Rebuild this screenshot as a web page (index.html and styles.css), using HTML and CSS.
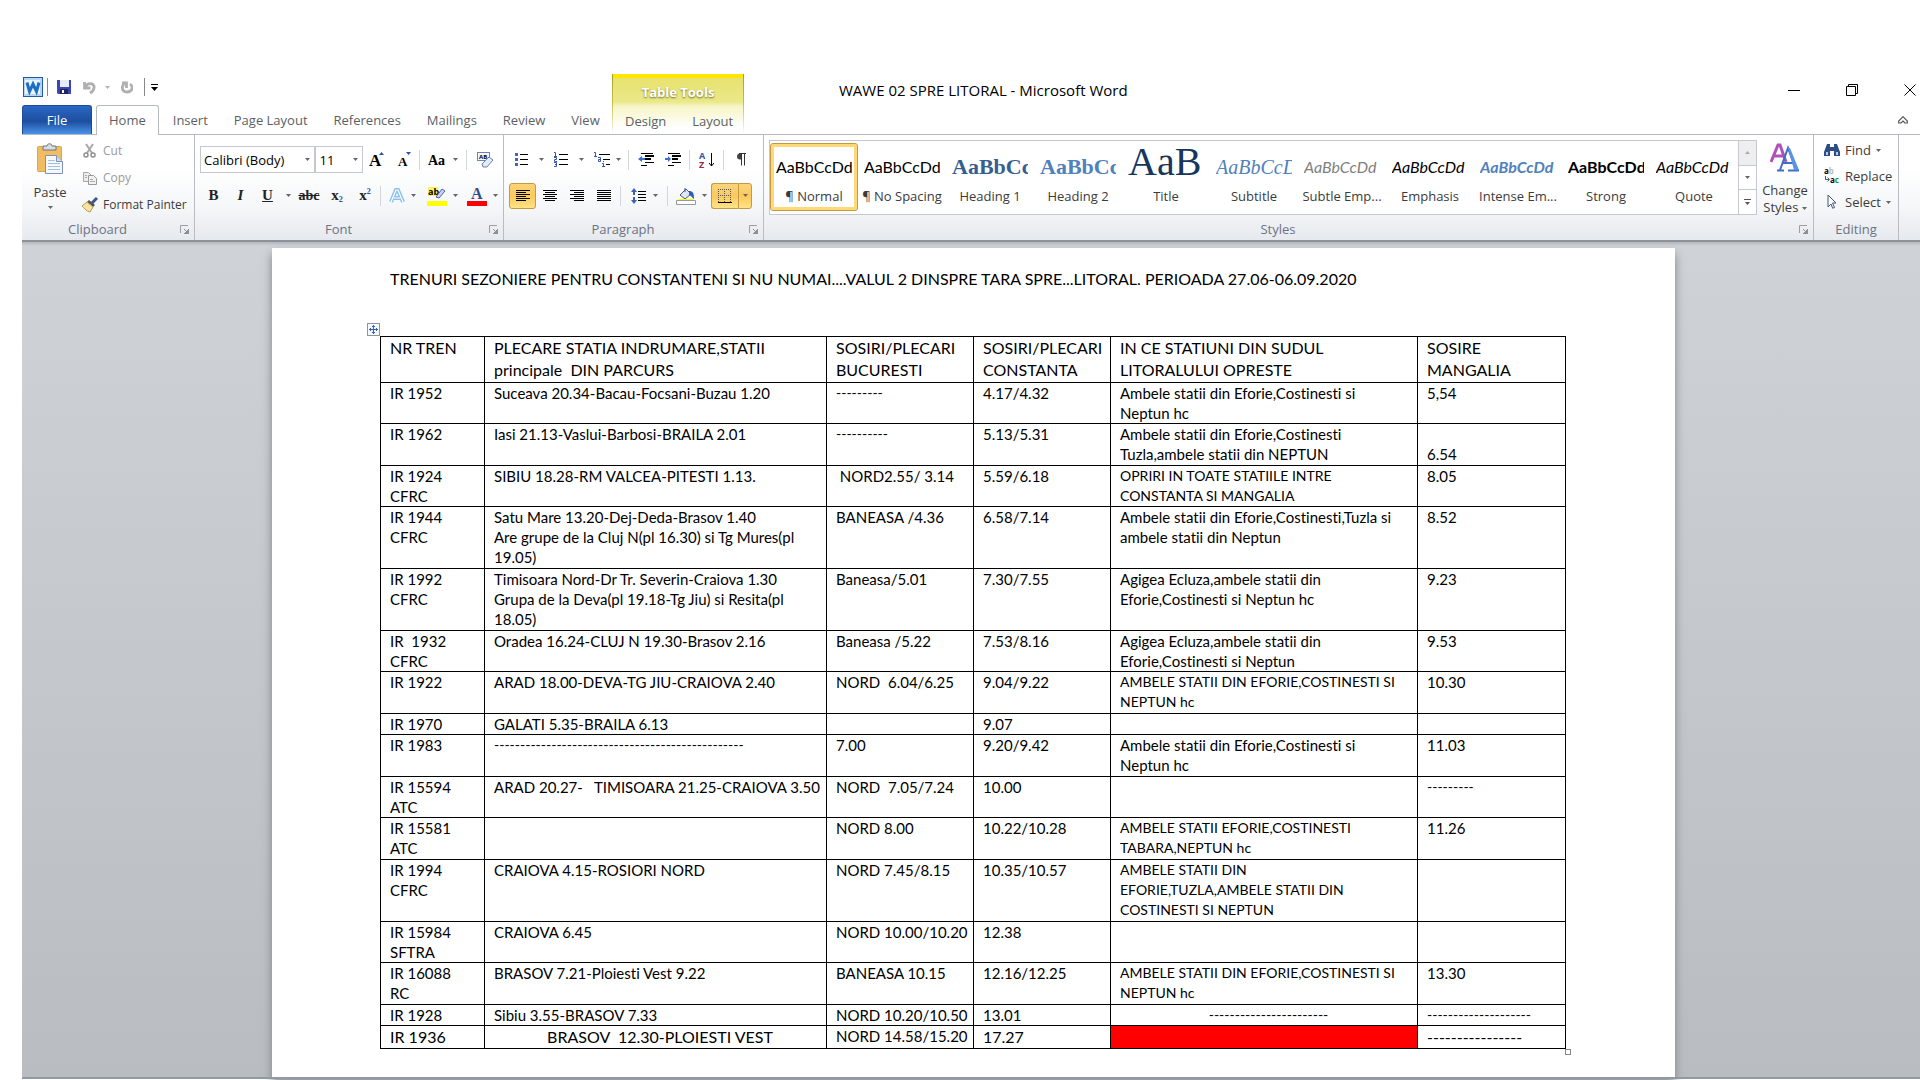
FILE: index.html
```
<!DOCTYPE html>
<html lang="ro">

<head>
    <meta charset="UTF-8">
    <meta name="viewport" content="width=device-width, initial-scale=1.0">
    <title>WAWE 02 SPRE LITORAL - Microsoft Word</title>
    <link rel="stylesheet" href="styles.css">
</head>

<body>
    <!-- shared shapes -->
    <svg class="defs" width="0" height="0" aria-hidden="true">
        <symbol id="arrow" viewBox="0 0 5 3"><path d="M0 0h5L2.500 3z" fill="#666"/></symbol>
        <symbol id="launcher" viewBox="0 0 9 9"><path d="M.5 8V.5H8" fill="none" stroke="#9a9ea6"/><path d="M9 4v5H4zM4 4l3 3" fill="#8c9098" stroke="#8c9098"/></symbol>
    </svg>

    <header class="top">
        <div class="left">
            <div class="quick">
                <svg width="20" height="20" viewBox="0 0 20 20"><rect x=".5" y=".5" width="19" height="19" fill="#b9d6f2" stroke="#1f5ca8"/><rect x="2" y="3" width="15" height="14" fill="#eaf4fd"/><path d="M4 5.500l2.500 9L10 7l3.500 7.500L16 5.500" fill="none" stroke="#1c6fc4" stroke-width="3"/></svg>
                <span class="line"></span>
                <button class="qbtn" aria-label="Save"><svg width="14" height="14" viewBox="0 0 14 14"><path d="M0 0h14v14H1l-1-1z" fill="#3b45b4"/><path d="M3 0h9v7H3z" fill="#e9edfb"/><path d="M3 9h8v5H3z" fill="#22265e"/><path d="M5 10h2v3H5z" fill="#fff"/></svg></button>
                <button class="qbtn" aria-label="Undo"><svg width="13" height="13" viewBox="0 0 13 13"><path d="M1.500 1v6h6M2 6c3-5 10-4 9 1-.5 3-2 4-4 5" fill="none" stroke="#b0b0b0" stroke-width="2.800"/></svg><svg class="arr pale"><use href="#arrow"/></svg></button>
                <button class="qbtn" aria-label="Redo"><svg width="12" height="13" viewBox="0 0 12 13"><path d="M3 3c-3 3-2 8 3 8s7-5 3-8M1 2h4.500v5" fill="none" stroke="#b0b0b0" stroke-width="2.800"/></svg></button>
                <span class="line"></span>
                <button class="qbtn more" aria-label="Customize"><svg width="7" height="7" viewBox="0 0 7 7"><path d="M0 0h7v1H0zM0 3h7L3.500 7z"/></svg></button>
            </div>
            <nav class="tabs">
                <button class="tab file">File</button>
                <button class="tab home">Home</button>
                <button class="tab">Insert</button>
                <button class="tab">Page Layout</button>
                <button class="tab">References</button>
                <button class="tab">Mailings</button>
                <button class="tab">Review</button>
                <button class="tab">View</button>
            </nav>
        </div>
        <div class="context">
            <div class="context-name">Table Tools</div>
            <div class="tabs">
                <button class="tab">Design</button>
                <button class="tab">Layout</button>
            </div>
        </div>
        <div class="right">
            <div class="titlebar">
                <h1>WAWE 02 SPRE LITORAL - Microsoft Word</h1>
                <button aria-label="Minimize"><svg width="12" height="12" viewBox="0 0 12 12"><path d="M0 6.500h12" stroke="#000"/></svg></button>
                <button aria-label="Restore"><svg width="12" height="12" viewBox="0 0 12 12"><path d="M.5 2.500h9v9h-9zM2.500 2.500v-2h9v9h-2" fill="none" stroke="#000"/></svg></button>
                <button aria-label="Close"><svg width="12" height="12" viewBox="0 0 12 12"><path d="M.5.5l11 11M11.500.5l-11 11" stroke="#000"/></svg></button>
            </div>
            <button class="collapse" aria-label="Minimize the ribbon"><svg width="10" height="8" viewBox="0 0 10 8"><path d="M5 .7L9.300 5v2H7L5 5 3 7H.7V5z" fill="#fff" stroke="#555" stroke-width="1.200"/></svg></button>
        </div>
    </header>

    <section class="ribbon">
        <div class="group clipboard">
            <div class="body">
                <button class="big">
                    <svg width="27" height="31" viewBox="0 0 27 31"><rect x=".5" y="3.500" width="24" height="25" rx="1" fill="#f0bd62" stroke="#dba650"/><path d="M6 3h4c0-3 5-3 5 0h4v4H6z" fill="#d9dde3" stroke="#6d7480"/><path d="M8.500 12.500h11l6 6v12h-17z" fill="#f4f8fd" stroke="#7d93b5"/><path d="M19.500 12.500v6h6" fill="#cfdcf0" stroke="#7d93b5"/><path d="M11 17.500h7M11 20.500h12M11 23.500h12M11 26.500h12" stroke="#a9bfdf"/></svg>
                    <span>Paste</span>
                    <svg class="arr"><use href="#arrow"/></svg>
                </button>
                <div class="list">
                    <button class="item off"><svg width="16" height="16" viewBox="0 0 16 16"><path d="M4 1l6 9M11 1l-6 9" stroke="#a8a8a8" stroke-width="2"/><circle cx="4" cy="12" r="2" fill="none" stroke="#8e8e8e" stroke-width="1.500"/><circle cx="11" cy="12" r="2" fill="none" stroke="#8e8e8e" stroke-width="1.500"/></svg>Cut</button>
                    <button class="item off"><svg width="16" height="16" viewBox="0 0 16 16"><path d="M1.500 2.500h5l3 3v6h-8z" fill="#eee" stroke="#a5a5a5"/><path d="M6.500 5.500h5l3 3v6h-8z" fill="#f2f2f2" stroke="#999"/><path d="M8 9.500h3M8 11.500h5M3 5.500h2M3 7.500h2" stroke="#aaa"/></svg>Copy</button>
                    <button class="item"><svg width="16" height="16" viewBox="0 0 16 16"><path d="M15 1l-5 5" stroke="#3c5487" stroke-width="3"/><path d="M7 3l6 5-2 2-6-5z" fill="#4b5563"/><path d="M5 5l6 5-3 5C4 14 2 11 0 9z" fill="#f6e3a0" stroke="#b99a50"/></svg>Format Painter</button>
                </div>
            </div>
            <div class="caption"><span>Clipboard</span><svg width="9" height="9"><use href="#launcher"/></svg></div>
        </div>

        <div class="group font">
            <div class="body rows">
                <div class="row">
                    <select class="face" aria-label="Font"><option>Calibri (Body)</option></select>
                    <select class="size" aria-label="Font size"><option>11</option></select>
                    <button class="ico w28" aria-label="Grow font"><svg width="16" height="20" viewBox="0 0 16 20"><text x="0" y="16" class="gl" font-size="17">A</text><path d="M10 5h5l-2.500-3z" fill="#2c4f9e"/></svg></button>
                    <button class="ico w28" aria-label="Shrink font"><svg width="15" height="20" viewBox="0 0 15 20"><text x="1" y="16" class="gl" font-size="12">A</text><path d="M9 2h5l-2.500 3z" fill="#2c4f9e"/></svg></button>
                    <span class="sep"></span>
                    <button class="ico w44" aria-label="Change case"><svg width="19" height="20" viewBox="0 0 19 20"><text x="0" y="15" class="gl" font-size="14">Aa</text></svg><svg class="arr"><use href="#arrow"/></svg></button>
                    <span class="sep"></span>
                    <button class="ico w36" aria-label="Clear formatting"><svg width="17" height="17" viewBox="0 0 17 17"><rect x=".5" y="1.500" width="12" height="8" fill="#f3f6fc" stroke="#6c83b4"/><text x="2" y="8" font-size="6" class="sans">AB</text><path d="M5 13l7-7 4 3-6 7H6z" fill="#e4ebf8" stroke="#6c83b4"/></svg></button>
                </div>
                <div class="row">
                    <button class="ico gl w27"><b>B</b></button>
                    <button class="ico gl w27"><i>I</i></button>
                    <button class="ico gl w27"><u>U</u></button>
                    <button class="ico w14" aria-label="Underline style"><svg class="arr"><use href="#arrow"/></svg></button>
                    <button class="ico gl w28 strike"><s>abc</s></button>
                    <button class="ico gl w28"><b>x</b><sub>2</sub></button>
                    <button class="ico gl w28"><b>x</b><sup>2</sup></button>
                    <span class="sep"></span>
                    <button class="ico w40" aria-label="Text effects"><svg width="16" height="16" viewBox="0 0 16 16"><path d="M2 14L7 2h2l5 12M4.500 10h7" fill="none" stroke="#8cc0ec" stroke-width="4"/><path d="M2 14L7 2h2l5 12M4.500 10h7" fill="none" stroke="#fff" stroke-width="1.200"/></svg><svg class="arr"><use href="#arrow"/></svg></button>
                    <button class="ico w40" aria-label="Highlight colour"><svg width="20" height="20" viewBox="0 0 20 20"><path d="M1 1h10v9H1z" fill="#fbf36a"/><text x="1" y="9" font-size="9" class="sans">ab</text><path d="M9 11l6-8 3 2-6 7z" fill="#c6d5ee" stroke="#4b66a3"/><path d="M0 15h20v5H0z" fill="#ff0"/></svg><svg class="arr"><use href="#arrow"/></svg></button>
                    <button class="ico w40" aria-label="Font colour"><svg width="20" height="20" viewBox="0 0 20 20"><text x="4" y="13" font-size="16" class="gl blue">A</text><path d="M0 15h20v5H0z" fill="red"/></svg><svg class="arr"><use href="#arrow"/></svg></button>
                </div>
            </div>
            <div class="caption"><span>Font</span><svg width="9" height="9"><use href="#launcher"/></svg></div>
        </div>

        <div class="group paragraph">
            <div class="body rows">
                <div class="row">
                    <button class="ico w40" aria-label="Bullets"><svg width="14" height="14" viewBox="0 0 14 14"><path d="M0 0h3v3H0zM0 5h3v3H0zM0 10h3v3H0z" fill="#4565b5"/><path d="M5 1.500h8M5 6.500h8M5 11.500h8" stroke="#000"/></svg><svg class="arr wide"><use href="#arrow"/></svg></button>
                    <button class="ico w40" aria-label="Numbering"><svg width="15" height="15" viewBox="0 0 15 15"><path d="M0 .5h1.500V4M0 4.500h3M0 5.500h2.500v2h-2v2H3M0 10.500h2.500v4H0M1 12.500h1.500" fill="none" stroke="#3558ae"/><path d="M5 2.500h9M5 7.500h9M5 12.500h9" stroke="#000"/></svg><svg class="arr wide"><use href="#arrow"/></svg></button>
                    <button class="ico w36" aria-label="Multilevel list"><svg width="16" height="15" viewBox="0 0 16 15"><path d="M0 .5h1.500V4M0 4.500h3M4 5.500h2.500v4h-2v-2h2M8 11.500h1.500V14M8 14.500h3M9 9.500h1" fill="none" stroke="#3558ae"/><path d="M5 2.500h11M9 7.500h7M12 12.500h4" stroke="#000"/></svg><svg class="arr"><use href="#arrow"/></svg></button>
                    <span class="sep"></span>
                    <button class="ico w27" aria-label="Decrease indent"><svg width="16" height="13" viewBox="0 0 16 13"><path d="M3 .5h12M7 3.500h9M7 6.500h6M7 9.500h9M3 12.500h6" stroke="#000"/><path d="M7 2.500h9M7 5.500h6" stroke="#000"/><path d="M0 6l4-3v2h3v2H4v2z" fill="#3b6fd0"/></svg></button>
                    <button class="ico w27" aria-label="Increase indent"><svg width="16" height="13" viewBox="0 0 16 13"><path d="M3 .5h12M7 3.500h9M7 6.500h6M7 9.500h9M3 12.500h6" stroke="#000"/><path d="M7 2.500h9M7 5.500h6" stroke="#000"/><path d="M6 6L3 3v2H0v2h3v2z" fill="#3b6fd0"/></svg></button>
                    <span class="sep"></span>
                    <button class="ico w27" aria-label="Sort"><svg width="15" height="20" viewBox="0 0 15 20"><text x="0" y="9" font-size="9" class="sans" fill="#2f55a8">A</text><text x="0" y="18" font-size="9" class="sans" fill="#9a2f3c">Z</text><path d="M12.500 3v13M10 13l2.500 3 2.500-3" fill="none" stroke="#000"/></svg></button>
                    <span class="sep"></span>
                    <button class="ico w27" aria-label="Show marks"><svg width="10" height="13" viewBox="0 0 10 13"><path d="M9.500.5H4a3 3 0 0 0 0 6h1V.5" fill="#444"/><path d="M3 .5h7M5.500.5v12M8.500.5v12" stroke="#333" fill="none"/></svg></button>
                </div>
                <div class="row">
                    <button class="ico w27 on" aria-label="Align left"><svg width="14" height="12" viewBox="0 0 14 12"><path d="M0 .5h14M0 2.500h10M0 4.500h14M0 6.500h10M0 8.500h14M0 10.500h10" stroke="#000"/></svg></button>
                    <button class="ico w27" aria-label="Center"><svg width="14" height="12" viewBox="0 0 14 12"><path d="M0 .5h14M2 2.500h10M0 4.500h14M2 6.500h10M0 8.500h14M2 10.500h10" stroke="#000"/></svg></button>
                    <button class="ico w27" aria-label="Align right"><svg width="14" height="12" viewBox="0 0 14 12"><path d="M0 .5h14M4 2.500h10M0 4.500h14M4 6.500h10M0 8.500h14M4 10.500h10" stroke="#000"/></svg></button>
                    <button class="ico w27" aria-label="Justify"><svg width="14" height="12" viewBox="0 0 14 12"><path d="M0 .5h14M0 2.500h14M0 4.500h14M0 6.500h14M0 8.500h14M0 10.500h14" stroke="#000"/></svg></button>
                    <span class="sep"></span>
                    <button class="ico w40" aria-label="Line spacing"><svg width="16" height="16" viewBox="0 0 16 16"><path d="M0 4l3-4 3 4H4v3H2V4zM0 12l3 4 3-4H4V9H2v3z" fill="#3a62b4"/><path d="M7 3.500h8M7 6.500h8M7 9.500h8M7 12.500h8" stroke="#000"/></svg><svg class="arr"><use href="#arrow"/></svg></button>
                    <span class="sep"></span>
                    <button class="ico w40" aria-label="Shading"><svg width="20" height="18" viewBox="0 0 20 18"><path d="M4 8l6-6 5 5-6 5z" fill="#dce6f5" stroke="#44597f"/><path d="M9 5V1" stroke="#44597f"/><path d="M13 4c4 0 5 2 5 8-2-1-2-3-5-4z" fill="#2f5fb0"/><path d="M2 12h15v1H2z" fill="#ff0"/><path d="M.5 13.500h19v4H.5z" fill="#fff" stroke="#999"/></svg><svg class="arr"><use href="#arrow"/></svg></button>
                    <button class="ico w27 on join" aria-label="Borders"><svg width="14" height="14" viewBox="0 0 14 14"><path d="M0 .5h14M0 6.500h14M.5 0v13M6.500 0v13M12.500 0v13" stroke="#555" stroke-dasharray="1 1"/><path d="M0 13.500h14" stroke="#000"/></svg></button>
                    <button class="ico w14 on" aria-label="Border types"><svg class="arr"><use href="#arrow"/></svg></button>
                </div>
            </div>
            <div class="caption"><span>Paragraph</span><svg width="9" height="9"><use href="#launcher"/></svg></div>
        </div>

        <div class="group styles">
            <div class="body">
                <div class="gallery">
                    <button class="style picked"><span class="show">AaBbCcDd</span><span>¶ Normal</span></button>
                    <button class="style"><span class="show">AaBbCcDd</span><span>¶ No Spacing</span></button>
                    <button class="style"><span class="show h1">AaBbCc</span><span>Heading 1</span></button>
                    <button class="style"><span class="show h2">AaBbCc</span><span>Heading 2</span></button>
                    <button class="style"><span class="show title">AaB</span><span>Title</span></button>
                    <button class="style"><span class="show subtitle">AaBbCcD</span><span>Subtitle</span></button>
                    <button class="style"><span class="show em subtle">AaBbCcDd</span><span>Subtle Emp...</span></button>
                    <button class="style"><span class="show em">AaBbCcDd</span><span>Emphasis</span></button>
                    <button class="style"><span class="show em intense">AaBbCcDd</span><span>Intense Em...</span></button>
                    <button class="style"><span class="show strong">AaBbCcDd</span><span>Strong</span></button>
                    <button class="style"><span class="show em">AaBbCcDd</span><span>Quote</span></button>
                    <div class="scroll">
                        <button class="dim" aria-label="Previous styles"><svg width="5" height="3" viewBox="0 0 5 3"><path d="M0 3h5L2.500 0z" fill="#aaa"/></svg></button>
                        <button aria-label="Next styles"><svg class="arr"><use href="#arrow"/></svg></button>
                        <button aria-label="All styles"><svg width="7" height="6" viewBox="0 0 7 6"><path d="M0 0h7v1H0zM1 3h5L3.500 6z" fill="#555"/></svg></button>
                    </div>
                </div>
                <button class="big change">
                    <svg width="30" height="29" viewBox="0 0 30 29"><path d="M1 19L8 2h2l6 17M4 13h9" fill="none" stroke="#b050b8" stroke-width="3"/><path d="M7 27.500h7M18 27.500h11M10 27l8-22 8 22M13 20h10" fill="none" stroke="#3f6fc4" stroke-width="2"/><path d="M18 5h2l9 22h-5z" fill="#5b92e6"/></svg>
                    <span>Change</span>
                    <span>Styles <svg class="arr"><use href="#arrow"/></svg></span>
                </button>
            </div>
            <div class="caption"><span>Styles</span><svg width="9" height="9"><use href="#launcher"/></svg></div>
        </div>

        <div class="group editing">
            <div class="body list">
                <button class="item"><svg width="16" height="14" viewBox="0 0 16 14"><path d="M3 1h3v3h4V1h3l3 8v4h-6V8H6v5H0V9z" fill="#2d4f86"/><path d="M2 9h2v3H2zM12 9h2v3h-2z" fill="#b8cbe8"/></svg>Find <svg class="arr"><use href="#arrow"/></svg></button>
                <button class="item"><svg width="16" height="20" viewBox="0 0 16 20"><text x="0" y="8" font-size="8" class="sans">a<tspan fill="#bbb">b</tspan></text><text x="6" y="17" font-size="8" class="sans">a<tspan fill="#1f9a1f">c</tspan></text><path d="M1.500 10v3.500H5M3.500 11.500l2 2-2 2" fill="none" stroke="#3b5a9a"/></svg>Replace</button>
                <button class="item"><svg width="16" height="16" viewBox="0 0 16 16"><path d="M4 1l8 8H8.500l2 4.500-1.800.8L7 10l-3 3z" fill="#fff" stroke="#44597f"/></svg>Select <svg class="arr"><use href="#arrow"/></svg></button>
            </div>
            <div class="caption"><span>Editing</span></div>
        </div>
    </section>

    <main class="desk">
        <article class="page">
            <p class="heading">TRENURI SEZONIERE PENTRU CONSTANTENI SI NU NUMAI....VALUL 2 DINSPRE TARA SPRE...LITORAL. PERIOADA 27.06-06.09.2020</p>
            <div class="holder">
                <svg class="move" width="13" height="13" viewBox="0 0 13 13"><rect x=".5" y=".5" width="12" height="12" fill="#f7f8fa" stroke="#8f949c"/><path d="M6.500 2v9M2 6.500h9M5 3.500h3M5 9.500h3M3.500 5v3M9.500 5v3" stroke="#2f62c4"/></svg>
                <table>
                    <colgroup>
                        <col class="c1"><col class="c2"><col class="c3"><col class="c4"><col><col class="c6">
                    </colgroup>
                    <tr class="head">
                        <th>NR TREN</th>
                        <th>PLECARE STATIA INDRUMARE,STATII<br>principale&nbsp; DIN PARCURS</th>
                        <th>SOSIRI/PLECARI<br>BUCURESTI</th>
                        <th>SOSIRI/PLECARI<br>CONSTANTA</th>
                        <th>IN CE STATIUNI DIN SUDUL<br>LITORALULUI OPRESTE</th>
                        <th>SOSIRE<br>MANGALIA</th>
                    </tr>
                    <tr>
                        <td>IR 1952</td>
                        <td>Suceava 20.34-Bacau-Focsani-Buzau 1.20</td>
                        <td class="dash">---------</td>
                        <td>4.17/4.32</td>
                        <td>Ambele statii din Eforie,Costinesti si<br>Neptun hc</td>
                        <td>5,54</td>
                    </tr>
                    <tr class="loose">
                        <td>IR 1962</td>
                        <td>Iasi 21.13-Vaslui-Barbosi-BRAILA 2.01</td>
                        <td class="dash">----------</td>
                        <td>5.13/5.31</td>
                        <td>Ambele statii din Eforie,Costinesti<br>Tuzla,ambele statii din NEPTUN</td>
                        <td><br>6.54</td>
                    </tr>
                    <tr>
                        <td>IR 1924<br>CFRC</td>
                        <td>SIBIU 18.28-RM VALCEA-PITESTI 1.13.</td>
                        <td>&nbsp;NORD2.55/ 3.14</td>
                        <td>5.59/6.18</td>
                        <td class="caps">OPRIRI IN TOATE STATIILE INTRE<br>CONSTANTA SI MANGALIA</td>
                        <td>8.05</td>
                    </tr>
                    <tr class="loose">
                        <td>IR 1944<br>CFRC</td>
                        <td>Satu Mare 13.20-Dej-Deda-Brasov 1.40<br>Are grupe de la Cluj N(pl 16.30) si Tg Mures(pl<br>19.05)</td>
                        <td>BANEASA /4.36</td>
                        <td>6.58/7.14</td>
                        <td>Ambele statii din Eforie,Costinesti,Tuzla si<br>ambele statii din Neptun</td>
                        <td>8.52</td>
                    </tr>
                    <tr class="loose">
                        <td>IR 1992<br>CFRC</td>
                        <td>Timisoara Nord-Dr Tr. Severin-Craiova 1.30<br>Grupa de la Deva(pl 19.18-Tg Jiu) si Resita(pl<br>18.05)</td>
                        <td>Baneasa/5.01</td>
                        <td>7.30/7.55</td>
                        <td>Agigea Ecluza,ambele statii din<br>Eforie,Costinesti si Neptun hc</td>
                        <td>9.23</td>
                    </tr>
                    <tr>
                        <td>IR&nbsp; 1932<br>CFRC</td>
                        <td>Oradea 16.24-CLUJ N 19.30-Brasov 2.16</td>
                        <td>Baneasa /5.22</td>
                        <td>7.53/8.16</td>
                        <td>Agigea Ecluza,ambele statii din<br>Eforie,Costinesti si Neptun</td>
                        <td>9.53</td>
                    </tr>
                    <tr class="loose">
                        <td>IR 1922</td>
                        <td>ARAD 18.00-DEVA-TG JIU-CRAIOVA 2.40</td>
                        <td>NORD&nbsp; 6.04/6.25</td>
                        <td>9.04/9.22</td>
                        <td class="caps">AMBELE STATII DIN EFORIE,COSTINESTI SI<br>NEPTUN hc</td>
                        <td>10.30</td>
                    </tr>
                    <tr>
                        <td>IR 1970</td>
                        <td>GALATI 5.35-BRAILA 6.13</td>
                        <td></td>
                        <td>9.07</td>
                        <td></td>
                        <td></td>
                    </tr>
                    <tr class="loose">
                        <td>IR 1983</td>
                        <td class="dash">------------------------------------------------</td>
                        <td>7.00</td>
                        <td>9.20/9.42</td>
                        <td>Ambele statii din Eforie,Costinesti si<br>Neptun hc</td>
                        <td>11.03</td>
                    </tr>
                    <tr>
                        <td>IR 15594<br>ATC</td>
                        <td>ARAD 20.27-&nbsp;&nbsp; TIMISOARA 21.25-CRAIOVA 3.50</td>
                        <td>NORD&nbsp; 7.05/7.24</td>
                        <td>10.00</td>
                        <td></td>
                        <td class="dash">---------</td>
                    </tr>
                    <tr class="loose">
                        <td>IR 15581<br>ATC</td>
                        <td></td>
                        <td>NORD 8.00</td>
                        <td>10.22/10.28</td>
                        <td class="caps">AMBELE STATII EFORIE,COSTINESTI<br>TABARA,NEPTUN hc</td>
                        <td>11.26</td>
                    </tr>
                    <tr class="loose">
                        <td>IR 1994<br>CFRC</td>
                        <td>CRAIOVA 4.15-ROSIORI NORD</td>
                        <td>NORD 7.45/8.15</td>
                        <td>10.35/10.57</td>
                        <td class="caps">AMBELE STATII DIN<br>EFORIE,TUZLA,AMBELE STATII DIN<br>COSTINESTI SI NEPTUN</td>
                        <td></td>
                    </tr>
                    <tr>
                        <td>IR 15984<br>SFTRA</td>
                        <td>CRAIOVA 6.45</td>
                        <td>NORD 10.00/10.20</td>
                        <td>12.38</td>
                        <td></td>
                        <td></td>
                    </tr>
                    <tr class="loose">
                        <td>IR 16088<br>RC</td>
                        <td>BRASOV 7.21-Ploiesti Vest 9.22</td>
                        <td>BANEASA 10.15</td>
                        <td>12.16/12.25</td>
                        <td class="caps">AMBELE STATII DIN EFORIE,COSTINESTI SI<br>NEPTUN hc</td>
                        <td>13.30</td>
                    </tr>
                    <tr>
                        <td>IR 1928</td>
                        <td>Sibiu 3.55-BRASOV 7.33</td>
                        <td>NORD 10.20/10.50</td>
                        <td>13.01</td>
                        <td class="dash center">-----------------------</td>
                        <td class="dash">--------------------</td>
                    </tr>
                    <tr class="last">
                        <td>IR 1936</td>
                        <td class="center">BRASOV&nbsp; 12.30-PLOIESTI VEST</td>
                        <td class="small">NORD 14.58/15.20</td>
                        <td>17.27</td>
                        <td class="red"></td>
                        <td>----------------</td>
                    </tr>
                </table>
                <span class="grip"></span>
            </div>
        </article>
    </main>
    <footer class="status"></footer>
</body>

</html>
```
FILE: styles.css
```
* {
    box-sizing: border-box;
}

body {
    margin: 0;
    padding: 74px 0 0 22px;
    min-height: 100vh;
    display: flex;
    flex-direction: column;
    background: white;
    color: #3b3b3b;
    font-family: "Open Sans", "Noto Sans", sans-serif;
    font-size: 13px;
    overflow: hidden;
}

button {
    border: 0;
    padding: 0;
    background: none;
    color: inherit;
    font: inherit;
    white-space: nowrap;
}

svg {
    flex: none;
}

.defs {
    position: absolute;
}

.arr {
    width: 5px;
    height: 3px;
}

.pale {
    opacity: 0.5;
}

/* title bar and tabs */

.top {
    display: flex;
    height: 60px;
}

.left {
    width: 590px;
    display: flex;
    flex-direction: column;
    justify-content: space-between;
}

.quick {
    height: 26px;
    display: flex;
    align-items: center;
    padding-left: 1px;
}

.line {
    width: 1px;
    height: 18px;
    margin-left: 4px;
    background: #888;
}

.qbtn+.line {
    margin-left: 8px;
}

.qbtn {
    display: flex;
    align-items: center;
    gap: 9px;
    margin: 0 4px 0 9px;
}

.qbtn+.qbtn {
    margin: 0 3px 0 8px;
}

.qbtn.more {
    margin-left: 6px;
}

.tabs {
    display: flex;
    height: 29px;
}

.tab {
    flex: none;
    padding: 0 13px;
    color: #5b5f66;
}

.file {
    width: 70px;
    color: white;
    background: linear-gradient(#2a67c4, #1d4f9f 55%, #4b93ea);
    border: 1px solid #1c4c97;
    border-bottom: 0;
    border-radius: 3px 3px 0 0;
}

.home {
    margin: 0 1px -1px 4px;
    padding: 0 12px 2px;
    background: white;
    border: 1px solid #b6babf;
    border-bottom: 0;
    border-radius: 3px 3px 0 0;
    position: relative;
}

.context {
    width: 132px;
    padding-top: 4px;
    background: linear-gradient(#ffe600 4px, #e8e26e 4px, #ebe88a 28px, #f7f5c4 32px, #fff 54px);
    border: solid;
    border-width: 0 1px;
    border-image: linear-gradient(#a89c20, #c9c04c 50%, #fff) 1;
    display: flex;
    flex-direction: column;
    justify-content: space-between;
}

.context .tab {
    padding: 0 14px 0 12px;
}

.context-name {
    line-height: 29px;
    text-align: center;
    color: white;
    font-weight: bold;
    text-shadow: 0 1px 2px #6e6a20;
}

.right {
    flex: 1;
    display: flex;
    flex-direction: column;
    padding-right: 4px;
}

.titlebar {
    height: 31px;
    display: flex;
    align-items: center;
    gap: 46px;
}

.titlebar h1 {
    flex: 1;
    margin: 0 0 0 95px;
    font-size: 15px;
    line-height: 20px;
    font-weight: normal;
    color: black;
    word-spacing: normal;
}

.titlebar button,
.collapse {
    display: flex;
}

.collapse {
    align-self: flex-end;
    margin: 11px 8px 0 0;
}

/* ribbon */

.ribbon {
    display: flex;
    height: 108px;
    border-top: 1px solid #b6babf;
    border-bottom: 2px solid #8d9299;
    background: linear-gradient(white 30%, #f5f6f8 70%, #e6e9ee);
}

.group {
    display: flex;
    flex-direction: column;
    border-right: 1px solid #b9bcc2;
}

.group .body {
    flex: 1;
    display: flex;
}

.caption {
    height: 20px;
    display: flex;
    align-items: center;
    padding: 0 5px 2px 0;
    color: #6d7384;
}

.caption span {
    flex: 1;
    padding-right: 7px;
    text-align: center;
}

.editing .caption {
    padding-right: 0;
}

.editing .caption span {
    padding-right: 0;
}

.clipboard {
    width: 173px;
}

.font {
    width: 309px;
}

.paragraph {
    width: 260px;
}

.styles {
    flex: 1;
}

.editing {
    width: 85px;
    margin-right: 21px;
}

.big {
    width: 56px;
    padding-top: 8px;
    display: flex;
    flex-direction: column;
    align-items: center;
}

.big span {
    line-height: 17px;
}

.big svg+span {
    margin-top: 10px;
}

.big>.arr {
    margin-top: 5px;
}

.big .arr {
    vertical-align: middle;
}

.group .list {
    display: flex;
    flex-direction: column;
    padding-top: 2px;
}

.item {
    height: 27px;
    display: flex;
    align-items: center;
    gap: 5px;
    padding-left: 4px;
}

.clipboard .item {
    font-size: 12px;
}

.off {
    color: #9b9b9b;
}

.group .rows {
    flex-direction: column;
    gap: 9px;
    padding: 11px 0 0 5px;
}

.row {
    height: 27px;
    display: flex;
    align-items: center;
}

select {
    height: 27px;
    border: 1px solid #c5c9cf;
    border-radius: 0;
    padding: 0 3px;
    appearance: none;
    font: inherit;
    color: black;
    background: white url("data:image/svg+xml,%3Csvg xmlns='http://www.w3.org/2000/svg' width='5' height='3'%3E%3Cpath d='M0 0h5L2.500 3z' fill='%23666'/%3E%3C/svg%3E") no-repeat right 4px center;
}

.face {
    width: 117px;
}

.size {
    width: 48px;
}

.ico {
    height: 26px;
    display: flex;
    align-items: center;
    justify-content: center;
    gap: 6px;
}

.w14 {
    width: 14px;
}

.w27 {
    width: 27px;
}

.w28 {
    width: 28px;
}

.w36 {
    width: 36px;
}

.w40 {
    width: 40px;
}

.w44 {
    width: 44px;
}

.arr.wide {
    margin-left: 4px;
}

.sep {
    width: 1px;
    height: 20px;
    margin: 0 3px;
    background: #d3d6db;
}

.font .sep {
    margin: 0 1px;
}

.gl {
    font-family: "Liberation Serif", serif;
    font-size: 15px;
    font-weight: bold;
    color: #222;
    gap: 0;
}

svg .gl {
    font-size: inherit;
}

svg .gl[font-size="17"] {
    font-size: 17px;
}

svg .gl[font-size="16"] {
    font-size: 16px;
}

svg .gl[font-size="14"] {
    font-size: 14px;
}

.blue {
    fill: #2f4f8f;
}

.gl sub,
.gl sup {
    font-size: 8px;
    line-height: 10px;
    color: #2c4f9e;
}

.gl sub {
    padding-top: 8px;
}

.gl sup {
    padding-bottom: 8px;
}

.strike {
    font-size: 14px;
}

.sans {
    font-family: "Open Sans", sans-serif;
    font-weight: bold;
}

.on {
    border: 1px solid #c29a42;
    border-radius: 3px;
    background: linear-gradient(#fbd47a, #fcc95c 50%, #ffe385);
}

.join {
    border-right: 0;
    border-radius: 3px 0 0 3px;
}

.join+.on {
    border-radius: 0 3px 3px 0;
}

/* style gallery */

.gallery {
    display: flex;
    flex: 1;
    height: 75px;
    margin: 5px 0 0 5px;
    border: 1px solid #c5c9cf;
    background: white;
}

.style {
    flex: 1;
    min-width: 0;
    display: flex;
    flex-direction: column;
    align-items: center;
    margin: 2px 0 3px;
    border: 1px solid transparent;
}

.picked {
    border: 1px solid #c29a42;
    border-radius: 3px;
    box-shadow: inset 0 0 0 3px #ffd978;
}

.show {
    width: 76px;
    height: 36px;
    line-height: 46px;
    margin-bottom: 7px;
    overflow: hidden;
    text-align: left;
    color: black;
    font-family: Lato, sans-serif;
    font-size: 16px;
}

.h1,
.h2,
.title,
.subtitle {
    font-family: "Liberation Serif", serif;
}

.h1,
.h2 {
    font-size: 22px;
    font-weight: bold;
}

.h1 {
    color: #365f91;
}

.h2 {
    color: #4f81bd;
}

.title {
    font-size: 40px;
    line-height: 36px;
    color: #17365d;
}

.subtitle {
    font-size: 20px;
    font-style: italic;
    color: #4f81bd;
}

.em {
    font-style: italic;
}

.subtle {
    color: #808080;
}

.intense {
    font-weight: bold;
    color: #4f81bd;
}

.strong {
    font-weight: bold;
}

.scroll {
    width: 18px;
    display: flex;
    flex-direction: column;
    border-left: 1px solid #c5c9cf;
}

.scroll button {
    flex: 1;
    display: flex;
    align-items: center;
    justify-content: center;
}

.scroll button+button {
    border-top: 1px solid #c5c9cf;
}

.dim {
    background: #eee;
}

.editing .item {
    padding-left: 10px;
    height: 26px;
}

/* document */

.desk {
    flex: 1;
    display: flex;
    padding: 6px 245px 0 250px;
    background: linear-gradient(#b4b7bc, #cfd2d7 4px, #b9bcc1);
}

.page {
    flex: 1;
    padding: 20px 109px 0 108px;
    background: white;
    box-shadow: 0 6px 9px #7d8187;
    color: black;
    font-family: Lato, sans-serif;
    font-size: 15px;
    line-height: 20px;
    font-variant-ligatures: none;
}

.heading {
    margin: 0 0 46px;
    padding-left: 10px;
    font-size: 16px;
    line-height: 22px;
    white-space: nowrap;
}

.holder {
    position: relative;
}

.move {
    position: absolute;
    left: -13px;
    top: -13px;
}

.grip {
    position: absolute;
    right: -5px;
    bottom: -6px;
    width: 6px;
    height: 6px;
    border: 1px solid #888;
    background: white;
}

table {
    width: 100%;
    table-layout: fixed;
    border-collapse: collapse;
}

th,
td {
    height: 21px;
    padding: 0 0 0 9px;
    border: 1px solid black;
    text-align: left;
    vertical-align: top;
    font-weight: normal;
    white-space: nowrap;
}

.c1 {
    width: 104px;
}

.c2 {
    width: 342px;
}

.c3 {
    width: 147px;
}

.c4 {
    width: 137px;
}

.c6 {
    width: 148px;
}

.head th {
    padding-bottom: 1px;
    font-size: 16px;
    line-height: 22px;
}

.loose td {
    padding-bottom: 1px;
}

.caps,
.dash {
    font-size: 14px;
}

.center {
    text-align: center;
}

.last td {
    font-size: 16px;
    line-height: 22px;
}

.last .small {
    font-size: 15px;
    line-height: 20px;
}

.red {
    background: red;
}

.status {
    height: 3px;
    border-top: 2px solid #8f9aa4;
}
```
